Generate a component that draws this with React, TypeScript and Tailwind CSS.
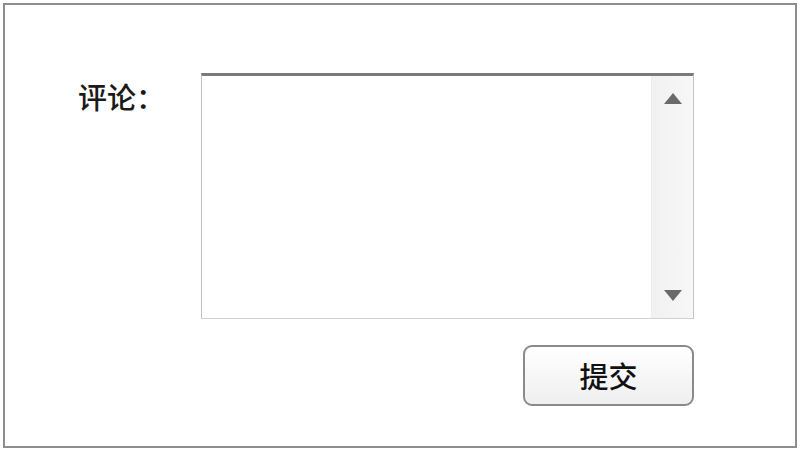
import React from 'react';

const font = { fontFamily: '"Noto Sans CJK SC", "Liberation Sans", sans-serif' };

export default function App() {
  return (
    <div className="w-[800px] h-[452px] bg-white pt-[3px] pl-[3px]" style={font}>
      <div className="w-[794px] h-[445px] border-2 border-[#8e8e8e] bg-white pt-[68px] pl-[73px] flex">
        <div className="w-[123px] pt-[3px] text-[29px] leading-[40px] text-[#1a1a1a] font-medium">评论：</div>
        <div className="flex flex-col">
          <div className="w-[493px] h-[246px] flex border-t-[3px] border-t-[#7a7a7a] border-x border-b border-x-[#c4c4c4] border-b-[#d0d0d0] bg-white">
            <div className="flex-1" />
            <div className="w-[42px] h-full bg-gradient-to-r from-[#f1f1f1] to-[#f7f7f7] border-l border-[#ececec] flex flex-col items-center justify-between py-[16px]">
              <svg width="20" height="13" viewBox="0 0 20 13">
                <polygon points="10,1 19,12 1,12" fill="#6a6a6a" />
              </svg>
              <svg width="20" height="13" viewBox="0 0 20 13">
                <polygon points="1,1 19,1 10,12" fill="#6a6a6a" />
              </svg>
            </div>
          </div>
          <div className="flex justify-end mt-[26px]">
            <button className="w-[171px] h-[61px] rounded-[9px] border-2 border-[#8a8a8a] bg-gradient-to-b from-white to-[#efefef] text-[29px] font-medium text-[#111] flex items-center justify-center">
              提交
            </button>
          </div>
        </div>
      </div>
    </div>
  );
}
